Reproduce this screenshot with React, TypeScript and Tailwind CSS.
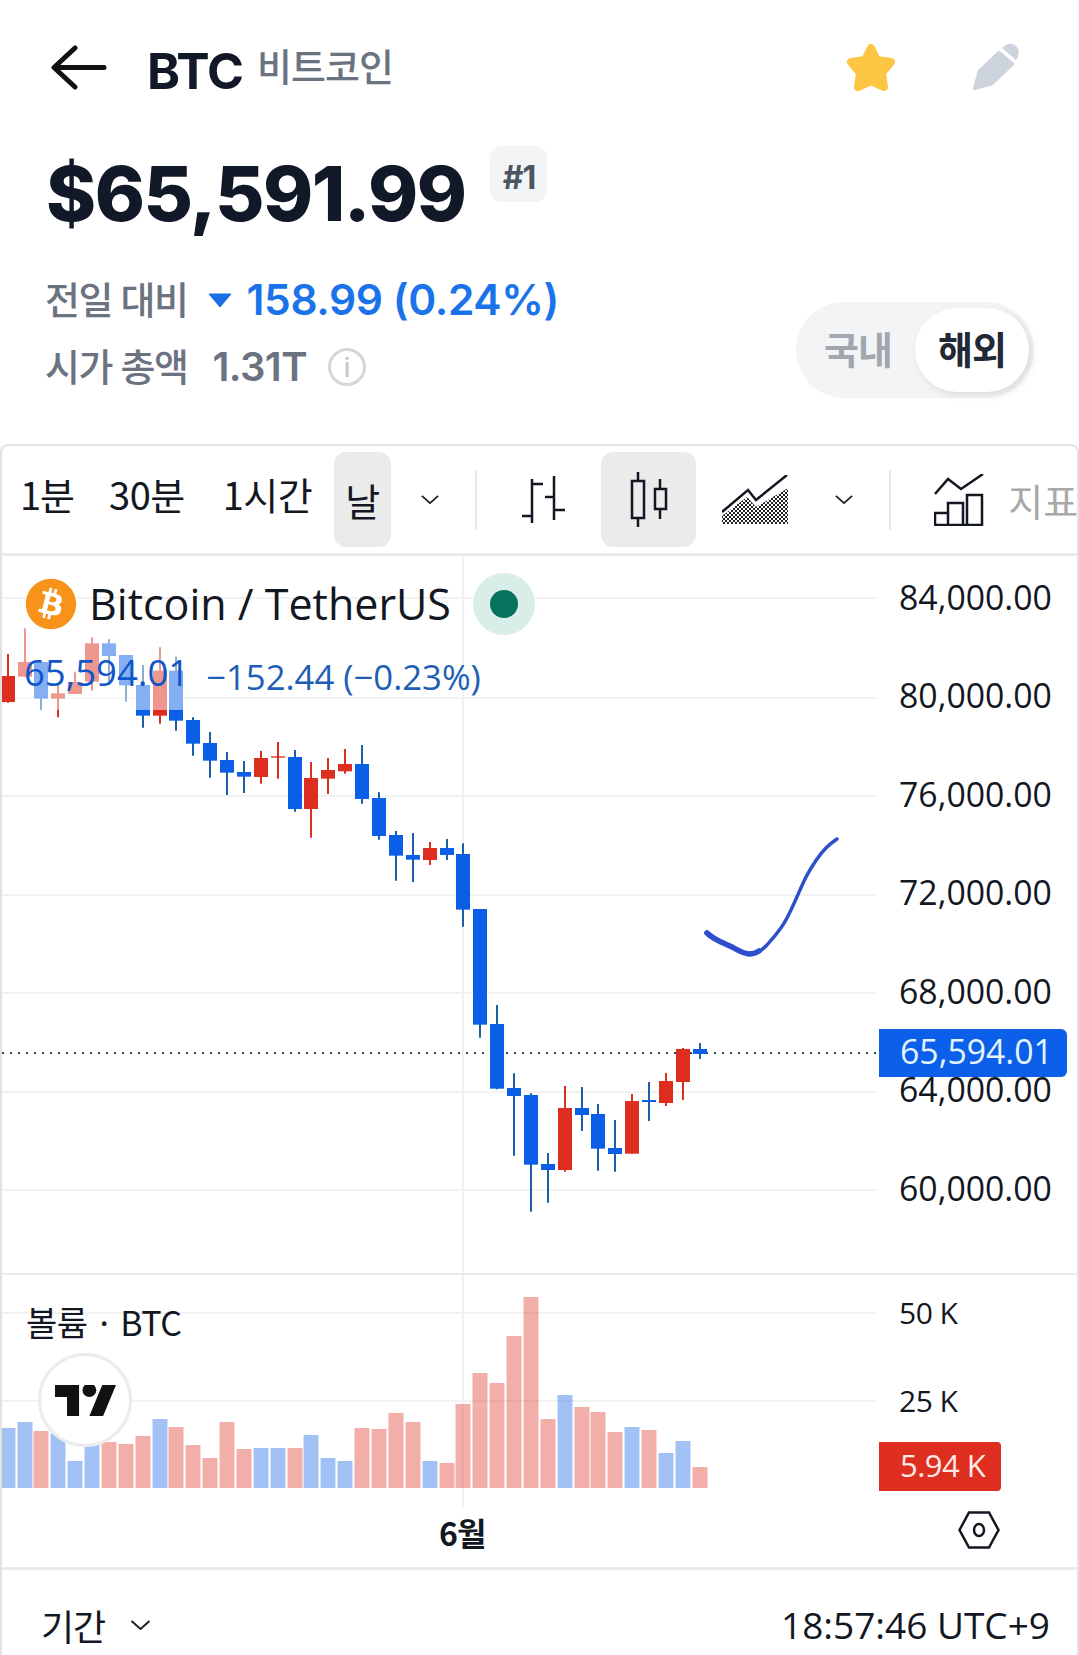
import React from "react";
import { FaBitcoin } from "react-icons/fa";

const RED = "#dd2e1f";
const BLUE = "#0b5fe6";
const WICK_B = "#1c5fa8";

// [x, wickTop, wickBot, bodyTop, bodyBot, isRed], in crop units of the first part
const A: [number, number, number, number, number, number][] = [
  [24,282,428,348,426,1],[75,205,350,306,350,1],[123,300,450,306,416,0],[174,376,472,400,416,1],
  [225,335,402,366,402,1],[276,232,392,250,365,1],[327,238,375,250,288,0],[378,285,425,285,376,0],
  [429,315,503,375,467,0],[480,262,491,332,467,1],[528,290,512,332,482,0],[579,472,587,480,551,0],
  [630,516,653,549,602,0],[681,576,705,600,638,0],[732,603,699,636,650,0],[783,573,671,594,651,1],
  [834,546,656,589,593,1],[885,570,755,591,747,0],[933,606,833,654,747,1],[984,594,702,630,656,1],
  [1035,567,641,612,634,1],[1086,555,731,612,717,0],[1137,697,839,714,828,0],[1188,813,962,825,887,0],
  [1239,819,966,885,899,0],[1290,846,915,864,900,1],[1341,837,900,864,885,0],
];
const B: [number, number, number, number, number, number][] = [
  [99,70,320,102,269,0],[150,267,653,267,614,0],[201,555,808,612,806,0],[252,760,1007,804,828,0],
  [303,820,1175,825,1034,0],[354,999,1148,1032,1050,0],[405,798,1055,864,1050,1],[456,801,933,864,885,0],
  [504,852,1052,882,986,0],[555,900,1055,984,1002,0],[606,822,1002,843,1001,1],[657,786,903,840,846,0],
  [708,759,858,783,849,1],[759,684,840,687,786,1],[810,669,717,687,702,0],
];
const candles = [
  ...A.map(([x, a, b, c, d, r]) => ({ x: x / 3, a: a / 3 + 560, b: b / 3 + 560, c: c / 3 + 560, d: d / 3 + 560, r })),
  ...B.map(([x, a, b, c, d, r]) => ({ x: x / 3 + 430, a: a / 3 + 820, b: b / 3 + 820, c: c / 3 + 820, d: d / 3 + 820, r })),
];
const vol: [number, number][] = [
  [504,0],[486,0],[513,1],[520,0],[603,0],[550,0],[546,1],[552,1],[528,1],[477,0],[501,1],[555,1],[594,1],[486,1],
  [567,1],[564,0],[564,0],[564,1],[525,0],[594,0],[603,0],[504,1],[507,1],[459,1],[486,1],[603,0],[609,1],[432,1],
  [339,1],[369,1],[228,1],[111,1],[477,1],[405,0],[441,1],[456,1],[516,1],[501,0],[510,1],[579,0],[543,0],[621,1],
];
const priceTicks = ["84,000.00","80,000.00","76,000.00","72,000.00","68,000.00","64,000.00","60,000.00"];
const grid = [598,698,796,895,993,1092,1190];

function Chevron({ className }: { className?: string }) {
  return (
    <svg viewBox="0 0 20 10" className={className} fill="none" stroke="#222" strokeWidth="2">
      <path d="M1 1l9 8 9-8" />
    </svg>
  );
}

function CandleChart() {
  return (
    <svg viewBox="2 556 877 717" className="block h-[717px] w-[877px] shrink-0">
      {grid.map((y) => <line key={y} x1="2" x2="877" y1={y} y2={y} stroke="#f2f2f2" strokeWidth="2" />)}
      <line x1="463" x2="463" y1="556" y2="1273" stroke="#f2f2f2" strokeWidth="2" />
      <line x1="2" x2="877" y1="1053" y2="1053" stroke="#2c4a55" strokeWidth="2" strokeDasharray="2 6" />
      {candles.map((k, i) => (
        <g key={i}>
          <line x1={k.x} x2={k.x} y1={k.a} y2={k.b} stroke={k.r ? RED : WICK_B} strokeWidth="2" />
          <rect x={k.x - 7} y={k.c} width="14" height={k.d - k.c} fill={k.r ? RED : BLUE} />
        </g>
      ))}
      <rect x="18" y="600" width="166" height="110" fill="#fff" fillOpacity="0.5" />
      <path d="M706 933C714 940 724 943 732 947C738 950 742 953 749 954C756 955 761 951 766 946C774 937 781 930 787 918C794 905 800 889 806 877C812 866 819 855 826 848C830 844 834 841 837 839" fill="none" stroke="#2d4fcb" strokeWidth="3.5" strokeLinecap="round" />
      <path d="M707 933C714 940 724 943 732 947C738 950 742 953 749 954C753 954 756 953 759 951" fill="none" stroke="#2d4fcb" strokeWidth="5.5" strokeLinecap="round" />
    </svg>
  );
}

function VolumeChart() {
  return (
    <svg viewBox="2 1275 877 233" className="block h-[233px] w-[877px] shrink-0">
      <line x1="2" x2="877" y1="1313" y2="1313" stroke="#f2f2f2" strokeWidth="2" />
      <line x1="2" x2="877" y1="1401" y2="1401" stroke="#f2f2f2" strokeWidth="2" />
      <line x1="463" x2="463" y1="1275" y2="1508" stroke="#f2f2f2" strokeWidth="2" />
      {vol.map(([t, r], i) => {
        const y = t / 3 + 1260;
        return <rect key={i} x={candles[i].x - 7.5} y={y} width="15" height={1488 - y} fill={r ? RED : BLUE} fillOpacity="0.38" />;
      })}
    </svg>
  );
}

export default function App() {
  return (
    <div className="h-[1655px] w-[1079px] overflow-hidden bg-white font-['Inter','Noto_Sans_CJK_KR',sans-serif]">
      <header className="h-[444px] pt-[43px]">
        <div className="flex h-[49px] items-center pl-[50px] pr-[60px]">
          <svg viewBox="0 0 57 45" className="h-[45px] w-[57px] shrink-0" fill="none" stroke="#111" strokeWidth="5" strokeLinecap="round" strokeLinejoin="round">
            <path d="M54 22.5H5M25 3L4 22.5 25 42" />
          </svg>
          <span className="ml-[40px] mt-[8px] text-[50px] leading-[49px] font-bold tracking-[-1px] text-[#111827]">BTC</span>
          <span className="ml-[14px] -mt-[1px] text-[38px] leading-[49px] font-medium tracking-[-1px] text-[#6b7280]">비트코인</span>
          <svg viewBox="0 0 50 49" className="ml-auto h-[49px] w-[50px] translate-x-[1px]">
            <path d="M25 5L31 17 45 19 36 30 38 44 25 38 12 44 14 30 5 19 19 17Z" fill="#fcc644" stroke="#fcc644" strokeWidth="8" strokeLinejoin="round" />
          </svg>
          <svg viewBox="0 0 48 49" className="ml-[76px] h-[49px] w-[48px]">
            <path d="M3 46L8 28 28 9 42 21 21 41Z" fill="#cdd3dd" stroke="#cdd3dd" strokeWidth="2.5" strokeLinejoin="round" />
            <path d="M31 5C35 1 41 -1 45 3 49 7 48 13 45 17Z" fill="#cdd3dd" />
          </svg>
        </div>
        <div className="mt-[54px] flex h-[91px] pl-[46px]">
          <span className="mt-[12px] text-[76px] leading-[70px] font-extrabold tracking-[-1.5px] text-[#111827]">$65,591.99</span>
          <span className="ml-[25px] flex h-[56px] w-[57px] items-center justify-center rounded-[12px] bg-[#f3f4f6] pt-[8px] text-[32px] font-bold tracking-[-1px] text-[#4b5563]">#1</span>
        </div>
        <div className="mt-[46px] flex justify-between pl-[45px] pr-[45px]">
          <div className="flex flex-col gap-[27px]">
            <div className="-mt-[3px] flex h-[40px] items-center">
              <span className="text-[38px] font-medium tracking-[-1.5px] text-[#6b7280]">전일 대비</span>
              <svg viewBox="0 0 24 14" className="ml-[21px] h-[14px] w-[24px]"><path d="M1 1h22L12 14Z" fill="#1a6fe4" strokeLinejoin="round" stroke="#1a6fe4" strokeWidth="1" /></svg>
              <span className="ml-[14px] text-[42.5px] font-semibold tracking-[-0.4px] text-[#1a73e8]">158.99 (0.24%)</span>
            </div>
            <div className="flex h-[40px] items-center">
              <span className="text-[38px] font-medium tracking-[-1.5px] text-[#6b7280]">시가 총액</span>
              <span className="ml-[25px] text-[40px] font-semibold tracking-[-0.6px] text-[#6b7280]">1.31T</span>
              <span className="ml-[21px] flex h-[38px] w-[38px] items-center justify-center rounded-full border-[3px] border-[#d4d6da] text-[26px] font-medium text-[#c4c7cc]">i</span>
            </div>
          </div>
          <div className="mt-[19px] flex h-[96px] w-[238px] items-center rounded-full bg-[#f3f4f6] pl-[28px] pr-[5px]">
            <span className="text-[38px] font-semibold tracking-[-1px] text-[#a1a6af]">국내</span>
            <span className="ml-auto flex h-[84px] w-[114px] items-center justify-center rounded-full bg-white text-[38px] font-semibold tracking-[-1px] text-[#1f2937] shadow-[3px_3px_8px_rgba(0,0,0,0.1)]">해외</span>
          </div>
        </div>
      </header>

      <main className="rounded-t-[8px] border-x-2 border-t-2 border-[#e2e2e2] font-['Open_Sans','Noto_Sans_CJK_KR',sans-serif] text-[#131722]">
        <div className="flex h-[110px] items-center overflow-hidden whitespace-nowrap border-b-[3px] border-[#ebebeb] font-['Noto_Sans_CJK_KR',sans-serif] text-[38px] font-normal [&>*]:shrink-0">
          <span className="ml-[18px] -mt-[12px] tracking-[-1px]">1분</span>
          <span className="ml-[35px] -mt-[12px] tracking-[-0.5px]">30분</span>
          <span className="ml-[38px] -mt-[12px] tracking-[-0.5px]">1시간</span>
          <span className="ml-[22px] flex h-[95px] w-[57px] items-center justify-center rounded-[12px] bg-[#ebebeb]">날</span>
          <Chevron className="ml-[29px] h-[9px] w-[20px]" />
          <span className="ml-[35px] h-[60px] w-[2px] bg-[#e8e8e8]" />
          <svg viewBox="523 477 43 48" className="ml-[45px] h-[48px] w-[43px]" fill="none" stroke="#131722" strokeWidth="2.5">
            <path d="M533 480V524M523 517H533M533 485H544M555 477V521M546 498H555M555 511H566" />
          </svg>
          <span className="ml-[36px] flex h-[95px] w-[95px] items-center justify-center rounded-[12px] bg-[#ebebeb]">
            <svg viewBox="632 472 38 55" className="h-[55px] w-[38px]" fill="none" stroke="#131722" strokeWidth="2.5">
              <path d="M640 472V481M640 518V527M662 479V489M662 509V519" />
              <rect x="634" y="481" width="12" height="37" />
              <rect x="657" y="489" width="11" height="20" />
            </svg>
          </span>
          <svg viewBox="723 473 67 50" className="ml-[26px] h-[50px] w-[67px]">
            <defs>
              <pattern id="hatch" width="4" height="4" patternUnits="userSpaceOnUse">
                <rect width="2" height="2" fill="#222" />
                <rect x="2" y="2" width="2" height="2" fill="#222" />
              </pattern>
            </defs>
            <path d="M723 522V514L748 495 757 505 789 486V522Z" fill="url(#hatch)" />
            <path d="M723 510L749 488 757 498 788 473" fill="none" stroke="#131722" strokeWidth="2.5" />
          </svg>
          <Chevron className="ml-[45px] h-[9px] w-[20px]" />
          <span className="ml-[35px] h-[60px] w-[2px] bg-[#e8e8e8]" />
          <svg viewBox="934 473 50 52" className="ml-[43px] h-[52px] w-[50px]" fill="none" stroke="#131722" strokeWidth="2.5">
            <path d="M935 493L948 478 961 488 983 473" />
            <path d="M935 524V512H948V524ZM948 524V502H963V524ZM967 524V494H982V524ZM935 524H982" />
          </svg>
          <span className="ml-[24px] text-[#a8a8a8]">지표</span>
        </div>

        <div className="relative flex h-[717px]">
          <CandleChart />
          <div className="-mt-[8px] w-[198px] pl-[20px] text-[33.8px]">
            {priceTicks.map((t) => <div key={t} className="flex h-[98.5px] items-center">{t}</div>)}
          </div>
          <span className="absolute left-[877px] top-[473px] flex h-[48px] w-[188px] items-center rounded-r-[6px] bg-[#0b5fe8] pb-[3px] pl-[21px] text-[33.8px] text-[#e4f4ff]">65,594.01</span>
          <div className="absolute left-[23px] top-[17px] flex items-center">
            <span className="block h-[52px] w-[52px] rounded-full bg-white"><FaBitcoin className="h-[52px] w-[52px] text-[#f7931a]" /></span>
            <span className="ml-[12px] text-[43px] leading-[52px] text-[#131722]">Bitcoin / TetherUS</span>
            <span className="ml-[22px] flex h-[62px] w-[62px] items-center justify-center rounded-full bg-[#daeee9]">
              <span className="h-[28px] w-[28px] rounded-full bg-[#08735c]" />
            </span>
          </div>
          <div className="absolute left-[22px] top-[92px] flex items-start leading-[48px]">
            <span className="text-[36.5px] text-[#1056c9]">65,594.01</span>
            <span className="ml-[17px] mt-[5px] text-[34.7px] text-[#1e5fb4]">−152.44 (−0.23%)</span>
          </div>
        </div>

        <div className="relative flex h-[235px] border-t-2 border-[#ebebeb]">
          <VolumeChart />
          <div className="-mt-[7px] w-[198px] pl-[20px] text-[30px]">
            <div className="flex h-[88px] items-center tracking-[-0.5px]">50 K</div>
            <div className="flex h-[88px] items-center tracking-[-0.5px]">25 K</div>
          </div>
          <span className="absolute left-[877px] top-[167px] flex h-[49px] w-[122px] items-center rounded-r-[4px] bg-[#dd2e1f] pb-[3px] pl-[21px] text-[31px] tracking-[-0.5px] text-[#ffe9e6]">5.94 K</span>
          <span className="absolute left-[24px] top-[27px] font-['Noto_Sans_CJK_KR',sans-serif] text-[34px] leading-[40px] tracking-[-0.5px]">볼륨 · BTC</span>
          <span className="absolute left-[36px] top-[78px] flex h-[94px] w-[94px] items-center justify-center rounded-full border-[3px] border-[#ececec] bg-white">
            <svg viewBox="0 4 35.5 18" className="h-[31px] w-[61px]" fill="#111">
              <path d="M14 22H7V11H0V4h14v18zM28 22h-8l7.5-18h8L28 22z" />
              <circle cx="20" cy="7" r="4" />
            </svg>
          </span>
        </div>

        <div className="flex h-[62px] items-center border-b-[3px] border-[#ebebeb] pb-[12px] pl-[437px] pr-[77px] font-['Noto_Sans_CJK_KR',sans-serif]">
          <span className="text-[32px] font-bold tracking-[-1px]">6월</span>
          <svg viewBox="0 0 42 38" className="ml-auto -mt-[4px] h-[38px] w-[42px]" fill="none" stroke="#131722" strokeWidth="2.5">
            <path d="M1.5 19L11 1.5H31L40.5 19 31 36.5H11Z" />
            <ellipse cx="21" cy="19" rx="5" ry="6" />
          </svg>
        </div>

        <div className="flex h-[85px] items-center pl-[39px] pr-[27px] pt-[24px]">
          <span className="font-['Noto_Sans_CJK_KR',sans-serif] text-[36px] tracking-[-1px]">기간</span>
          <Chevron className="ml-[24px] h-[10px] w-[23px]" />
          <span className="ml-auto whitespace-nowrap text-[37px]">18:57:46 UTC+9</span>
        </div>
      </main>
    </div>
  );
}
